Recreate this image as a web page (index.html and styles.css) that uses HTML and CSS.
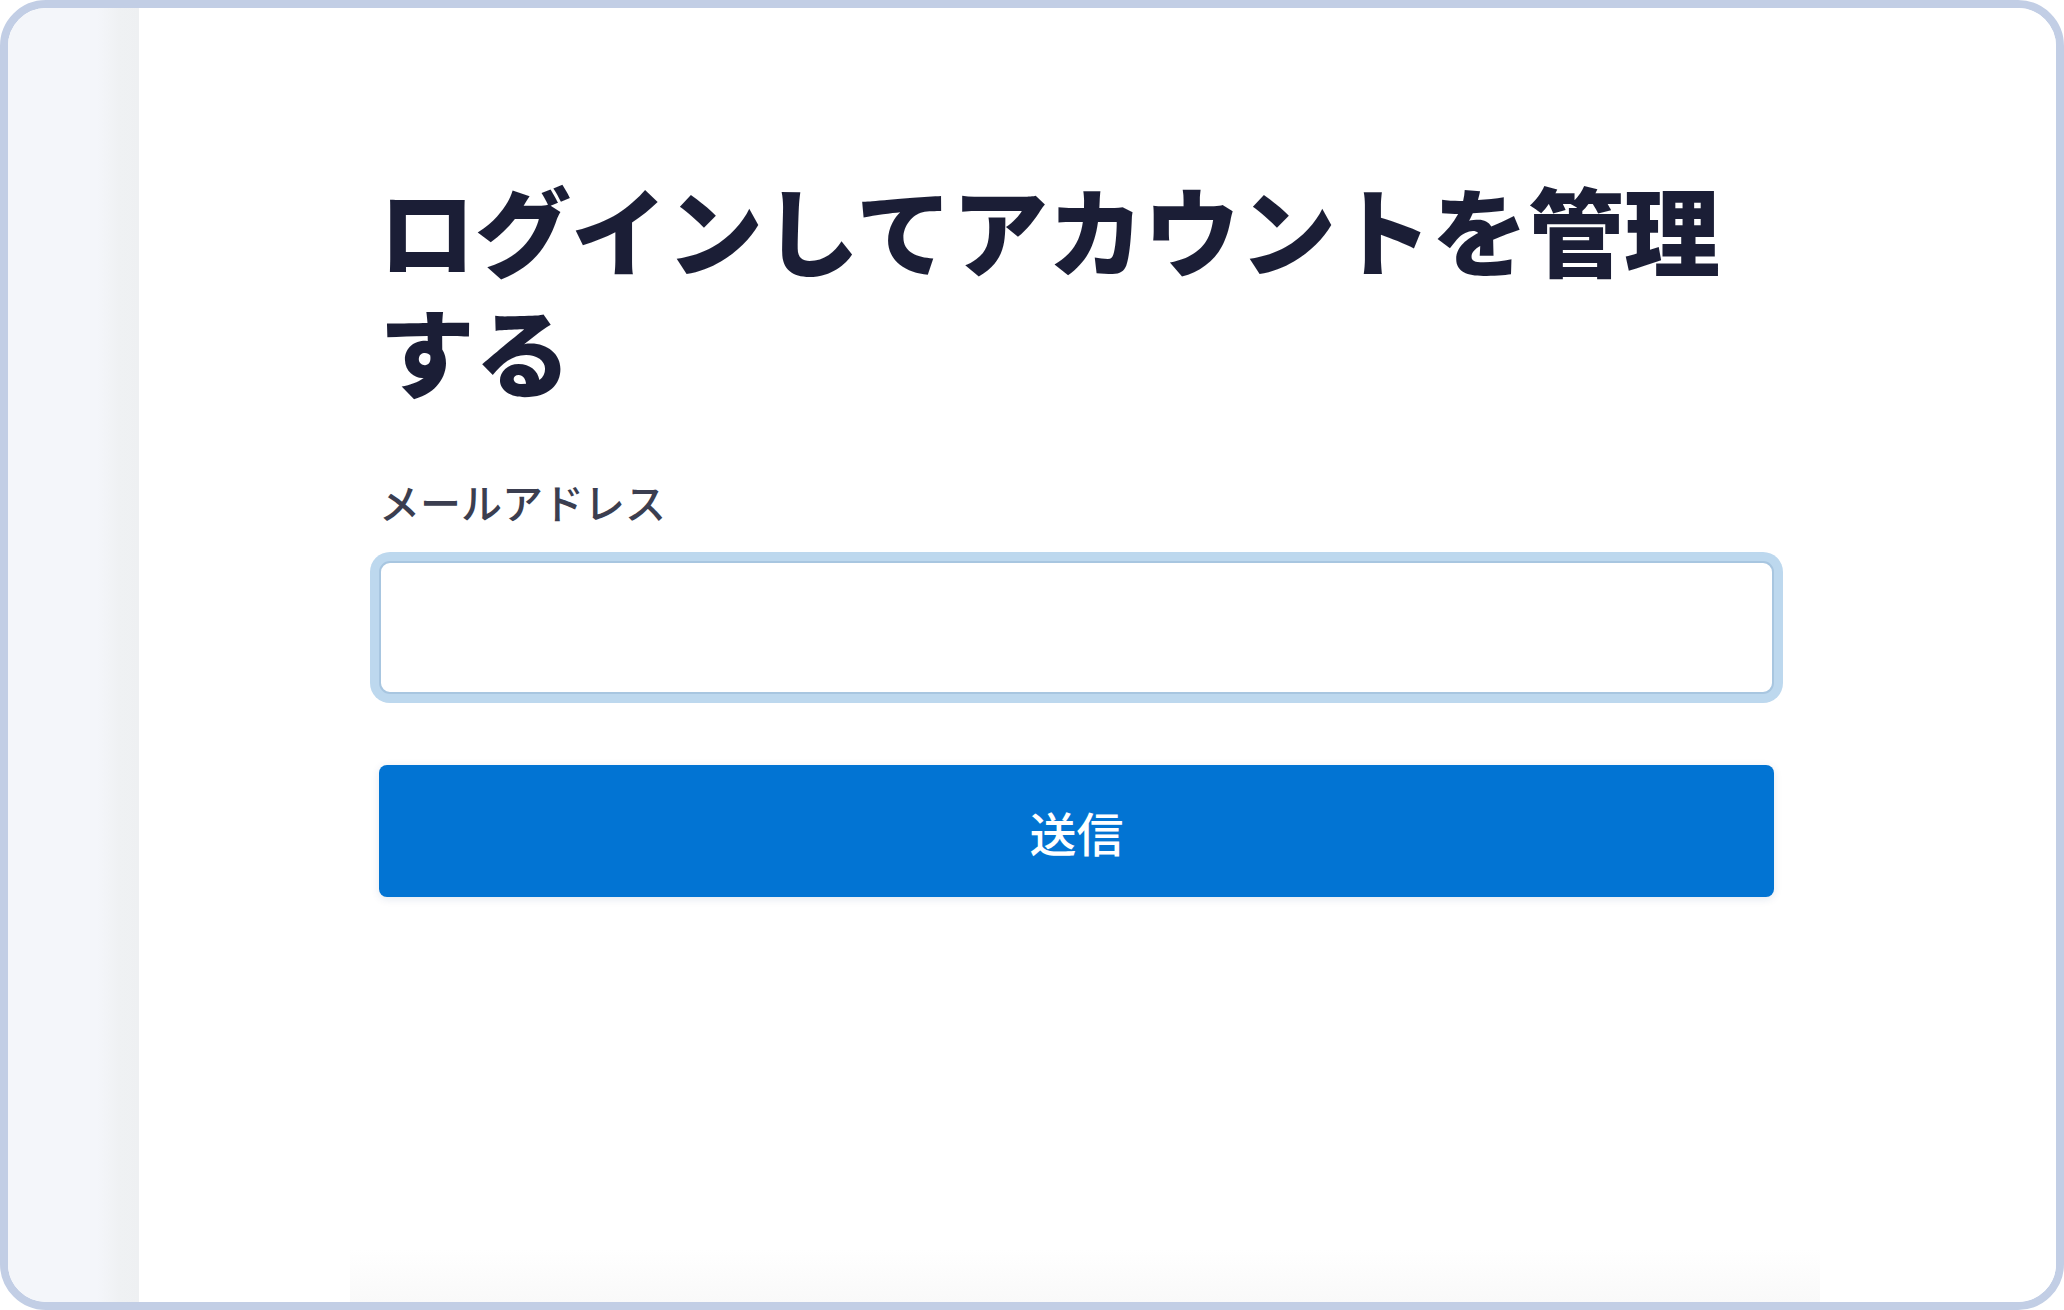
FILE: index.html
```html
<!DOCTYPE html>
<html lang="ja">
<head>
<meta charset="utf-8">
<title>ログイン</title>
<link rel="stylesheet" href="styles.css">
</head>
<body>
<div class="frame">
  <aside class="sidebar"></aside>
  <main class="main">
    <div class="content">
      <h1 class="title">ログインしてアカウントを管理する</h1>
      <form class="form">
        <label class="label" for="email">メールアドレス</label>
        <input class="input" id="email" type="email">
        <button class="submit" type="button">送信</button>
      </form>
    </div>
    <div class="fade"></div>
  </main>
</div>
</body>
</html>
```
FILE: styles.css
```css
html, body {
  margin: 0;
  padding: 0;
  background: #ffffff;
}
body {
  font-family: "Noto Sans CJK JP", "Noto Sans", sans-serif;
}
.frame {
  box-sizing: border-box;
  width: 2064px;
  height: 1310px;
  border: 8px solid #c2cee5;
  border-radius: 46px;
  overflow: hidden;
  display: flex;
  background: #ffffff;
}
.sidebar {
  width: 131px;
  flex: none;
  background: linear-gradient(to right, #f4f6fa 0%, #f4f6fa 68%, #eff1f3 85%, #eef0f2 100%);
}
.main {
  flex: 1;
  display: flex;
  flex-direction: column;
  background: #ffffff;
}
.content {
  padding-left: 240px;
  width: 1395px;
}
.title {
  margin: 159px 0 0 0;
  font-size: 96px;
  line-height: 121px;
  font-weight: 900;
  color: #1b1e36;
  letter-spacing: 0;
}
.form {
  display: flex;
  flex-direction: column;
  margin-top: 64px;
}
.label {
  font-size: 41px;
  line-height: 56px;
  color: #3b3e50;
  font-weight: 500;
}
.input {
  box-sizing: border-box;
  margin: 32px 0 0 0;
  height: 133px;
  width: 100%;
  border: 2px solid #a8c6e0;
  border-radius: 11px;
  box-shadow: 0 0 0 9px #bdd8ee;
  background: #ffffff;
  outline: none;
  font-size: 40px;
  padding: 0 24px;
}
.submit {
  margin-top: 71px;
  height: 132px;
  width: 100%;
  border: none;
  border-radius: 8px;
  background: #0274d3;
  color: #ffffff;
  font-family: "Noto Sans CJK JP", "Noto Sans", sans-serif;
  font-size: 47px;
  font-weight: 500;
  box-shadow: 0 2px 8px rgba(2, 60, 120, 0.12);
}
.fade {
  margin-top: auto;
  margin-left: 211px;
  width: 1470px;
  height: 53px;
  background: linear-gradient(to bottom, #ffffff, #f9f9f9);
}
```
